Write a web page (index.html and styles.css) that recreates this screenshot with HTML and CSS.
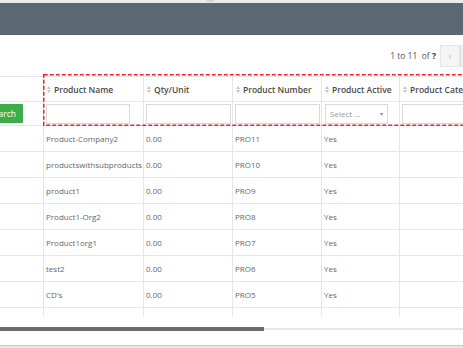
FILE: index.html
```html
<!DOCTYPE html>
<html lang="en">
<head>
    <meta charset="UTF-8">
    <meta name="viewport" content="width=device-width, initial-scale=1.0">
    <title>Products</title>
    <link rel="stylesheet" href="styles.css">
</head>
<body>
    <div class="top-strip"><span class="strip-knob"></span></div>
    <div class="navbar"></div>

    <div class="toolbar">
        <span class="page-info">1 to 11 &nbsp;of <b>?</b></span>
        <button class="page-btn">&lsaquo;</button>
        <span class="page-edge"></span>
    </div>

    <div class="grid-wrap">
        <div class="grid">
            <div class="row head">
                <div class="cell"></div>
                <div class="cell"><span class="sort"></span>Product Name</div>
                <div class="cell"><span class="sort"></span>Qty/Unit</div>
                <div class="cell"><span class="sort"></span>Product Number</div>
                <div class="cell"><span class="sort"></span>Product Active</div>
                <div class="cell"><span class="sort"></span>Product Category</div>
            </div>
            <div class="row filters">
                <div class="cell search-cell"><button class="search-btn">Search</button></div>
                <div class="cell"><input class="filter name-filter" type="text"></div>
                <div class="cell"><input class="filter" type="text"></div>
                <div class="cell"><input class="filter" type="text"></div>
                <div class="cell"><div class="select-box">Select ...<span class="caret">&#9662;</span></div></div>
                <div class="cell"><input class="filter" type="text"></div>
            </div>
            <div class="row"><div class="cell"></div><div class="cell">Product-Company2</div><div class="cell">0.00</div><div class="cell">PRO11</div><div class="cell">Yes</div><div class="cell"></div></div>
            <div class="row"><div class="cell"></div><div class="cell">productswithsubproducts</div><div class="cell">0.00</div><div class="cell">PRO10</div><div class="cell">Yes</div><div class="cell"></div></div>
            <div class="row"><div class="cell"></div><div class="cell">product1</div><div class="cell">0.00</div><div class="cell">PRO9</div><div class="cell">Yes</div><div class="cell"></div></div>
            <div class="row"><div class="cell"></div><div class="cell">Product1-Org2</div><div class="cell">0.00</div><div class="cell">PRO8</div><div class="cell">Yes</div><div class="cell"></div></div>
            <div class="row"><div class="cell"></div><div class="cell">Product1org1</div><div class="cell">0.00</div><div class="cell">PRO7</div><div class="cell">Yes</div><div class="cell"></div></div>
            <div class="row"><div class="cell"></div><div class="cell">test2</div><div class="cell">0.00</div><div class="cell">PRO6</div><div class="cell">Yes</div><div class="cell"></div></div>
            <div class="row"><div class="cell"></div><div class="cell">CD's</div><div class="cell">0.00</div><div class="cell">PRO5</div><div class="cell">Yes</div><div class="cell"></div></div>
            <div class="row"><div class="cell"></div><div class="cell"></div><div class="cell"></div><div class="cell"></div><div class="cell"></div><div class="cell"></div></div>
        </div>
        <svg class="highlight" width="420" height="52">
            <rect x="0.75" y="0.75" width="440" height="50.5" fill="none" stroke="#e8262a" stroke-width="1.5" stroke-dasharray="4 2"/>
        </svg>
    </div>

    <div class="hscroll"><div class="hscroll-thumb"></div></div>
    <div class="footer-line"></div>
</body>
</html>
```

FILE: styles.css
```css
body {
    margin: 0;
    font-family: "Open Sans", "Liberation Sans", sans-serif;
    font-size: 8px;
    color: #666;
    background: #fff;
    overflow: hidden;
    height: 348px;
}

.top-strip {
    height: 3px;
    background-color: #ebebeb;
    position: relative;
}

.strip-knob {
    position: absolute;
    left: 206px;
    top: 0;
    width: 8px;
    height: 2px;
    border-radius: 2px;
    background-color: #d4d4d4;
}

.navbar {
    height: 32px;
    background-color: #5a6874;
}

.toolbar {
    height: 41px;
    display: flex;
    justify-content: flex-end;
    align-items: center;
}

.page-info {
    color: #555;
    margin-right: 4px;
    font-size: 8.5px;
}

.page-info b {
    color: #333;
}

.page-btn {
    width: 20px;
    height: 22px;
    padding: 0;
    border: 1px solid #e6e6e6;
    background-color: #f5f5f5;
    color: #c8c8c8;
    font-size: 10px;
    font-family: inherit;
}

.page-edge {
    width: 2px;
    height: 22px;
    background-color: #efefef;
    border-left: 1px solid #e2e2e2;
}

.grid-wrap {
    position: relative;
    overflow: hidden;
    padding-top: 2px;
    margin-top: -2px;
}

.grid {
    border-top: 1px solid #e6e6e6;
    width: 540px;
    height: 239px;
    overflow: hidden;
}

.row {
    display: grid;
    grid-template-columns: 44px 100px 89px 89px 78px 140px;
    height: 26px;
    box-sizing: border-box;
    border-bottom: 1px solid #e6e6e6;
}

.row.head {
    height: 25px;
    font-weight: 600;
    font-size: 8.5px;
    color: #484848;
}

.row.filters {
    height: 24px;
}

.cell {
    border-right: 1px solid #e6e6e6;
    display: flex;
    align-items: center;
    padding-left: 2px;
    white-space: nowrap;
    overflow: hidden;
}

.head .cell {
    padding-left: 3px;
}

.sort {
    width: 4px;
    height: 7px;
    margin-right: 3px;
    position: relative;
    flex-shrink: 0;
}

.sort::before,
.sort::after {
    content: "";
    position: absolute;
    left: 0;
    border-left: 2px solid transparent;
    border-right: 2px solid transparent;
}

.sort::before {
    top: 0;
    border-bottom: 3px solid #c4c4c4;
}

.sort::after {
    bottom: 0;
    border-top: 3px solid #c4c4c4;
}

.search-cell {
    justify-content: flex-end;
    padding-right: 20px;
}

.search-btn {
    flex-shrink: 0;
    height: 19px;
    padding: 0 7px;
    border: none;
    border-radius: 1px;
    background-color: #3bae4a;
    color: #fff;
    font-family: inherit;
    font-size: 8.5px;
}

.filter {
    width: 85px;
    height: 20px;
    box-sizing: border-box;
    border: 1px solid #d9d9d9;
    margin: 0;
    padding: 0;
}

.name-filter {
    width: 84px;
}

.select-box {
    width: 63px;
    height: 20px;
    box-sizing: border-box;
    border: 1px solid #d9d9d9;
    margin-left: 1px;
    padding-left: 4px;
    display: flex;
    align-items: center;
    color: #999;
}

.caret {
    margin-left: auto;
    margin-right: 4px;
    font-size: 6px;
    color: #888;
}

.highlight {
    position: absolute;
    left: 43px;
    top: 0;
}

.hscroll {
    margin-top: 11px;
    height: 4px;
    display: flex;
    align-items: center;
    background: linear-gradient(#fff 1px, #e8e8e8 1px, #e8e8e8 3px, #fff 3px);
}

.hscroll-thumb {
    width: 264px;
    height: 4px;
    background-color: #6c6c6c;
}

.footer-line {
    margin-top: 14px;
    height: 3px;
    border-top: 1px solid #c6c6c6;
    background-color: #e8e8e8;
}
```
